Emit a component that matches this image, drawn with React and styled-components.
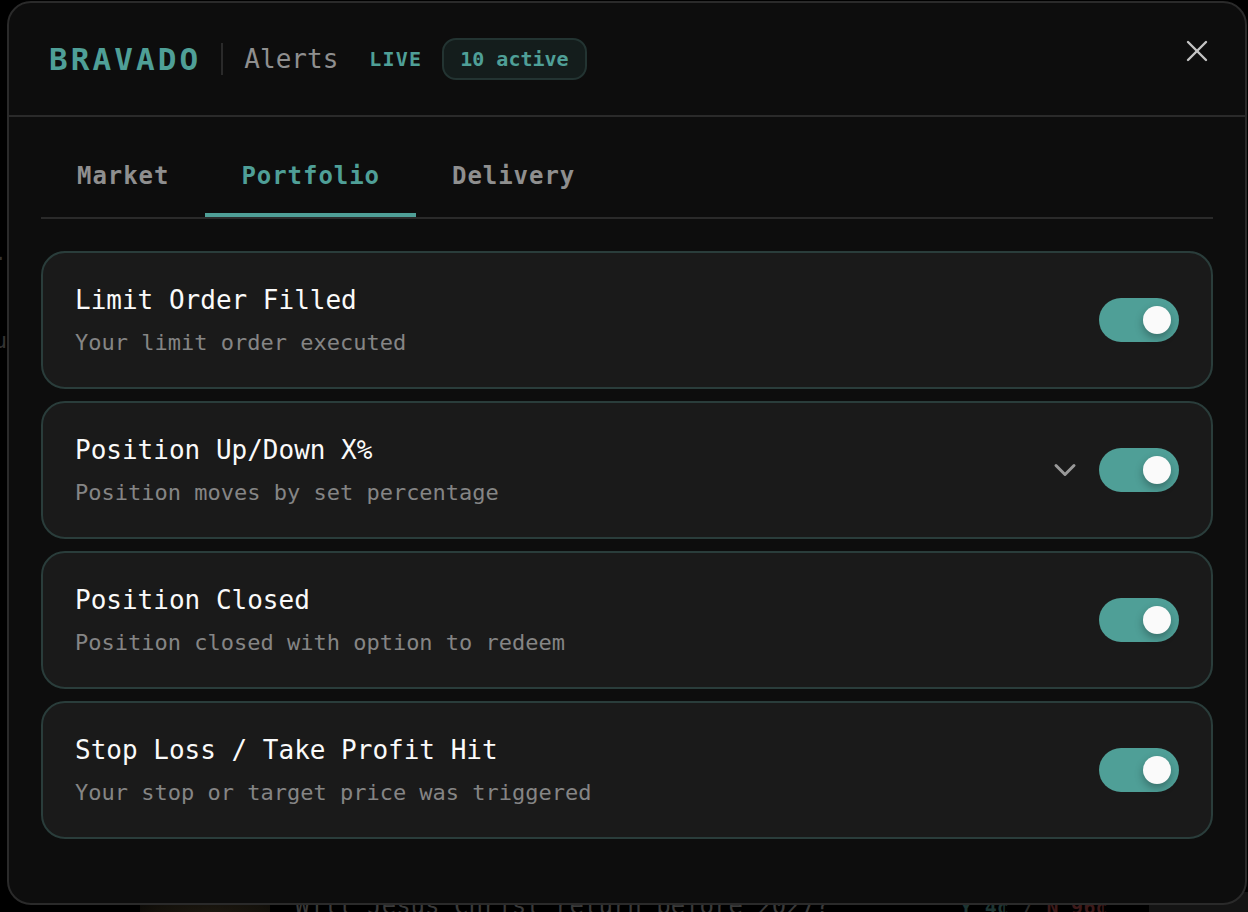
import React from 'react'
import styled, { createGlobalStyle } from 'styled-components'
import { X, ChevronDown } from 'lucide-react'

const rows = [
    { title: 'Limit Order Filled', desc: 'Your limit order executed' },
    { title: 'Position Up/Down X%', desc: 'Position moves by set percentage', expandable: true },
    { title: 'Position Closed', desc: 'Position closed with option to redeem' },
    { title: 'Stop Loss / Take Profit Hit', desc: 'Your stop or target price was triggered' },
]

const tabs = ['Market', 'Portfolio', 'Delivery']

const App = () => {
    return (
        <Page>
            <GlobalStyle />
            {/**what shows dimly behind the modal */}
            <BackdropEdge $top={240}>1.</BackdropEdge>
            <BackdropEdge $top={328}>u</BackdropEdge>
            <BackdropThumb />
            <BackdropText>Will Jesus Christ return before 2027?</BackdropText>
            <BackdropPrice>
                <PriceYes>Y 4¢</PriceYes> / <PriceNo>N 96¢</PriceNo>
            </BackdropPrice>
            <BackdropPanel />
            <Modal>
                <Header>
                    <Logo>BRAVADO</Logo>
                    <Divider />
                    <Title>Alerts</Title>
                    <Live>LIVE</Live>
                    <ActiveBadge>10 active</ActiveBadge>
                    <CloseButton>
                        <X size={36} strokeWidth={1.6} />
                    </CloseButton>
                </Header>
                <Body>
                    <TabBar>
                        {tabs.map(tab => (
                            <Tab key={tab} $active={tab === 'Portfolio'}>{tab}</Tab>
                        ))}
                    </TabBar>
                    <Rows>
                        {rows.map(row => (
                            <Row key={row.title}>
                                <RowText>
                                    <RowTitle>{row.title}</RowTitle>
                                    <RowDesc>{row.desc}</RowDesc>
                                </RowText>
                                <RowControls>
                                    {row.expandable && (
                                        <Chevron>
                                            <ChevronDown size={36} strokeWidth={2} />
                                        </Chevron>
                                    )}
                                    <Toggle>
                                        <Knob />
                                    </Toggle>
                                </RowControls>
                            </Row>
                        ))}
                    </Rows>
                </Body>
            </Modal>
        </Page>
    )
}

export default App

const GlobalStyle = createGlobalStyle`
    html, body {
        margin : 0;
        height : 100%;
        background-color : #000;
    }
    * {
        box-sizing : border-box;
    }
`

const Page = styled.div`
    position : relative;
    width : 1248px;
    height : 912px;
    overflow : hidden;
    padding : 1px 1px 7px 7px;
    background-color : #000;
    font-family : "DejaVu Sans Mono", "Liberation Mono", monospace;
`

const BackdropEdge = styled.div`
    position : absolute;
    right : 1241px;
    top : ${props => props.$top}px;
    font-size : 22px;
    line-height : 26px;
    color : #333;
    white-space : nowrap;
`

const BackdropText = styled.div`
    position : absolute;
    left : 295px;
    top : 892px;
    font-size : 24px;
    line-height : 28px;
    color : #3a3a3a;
    white-space : nowrap;
`

const BackdropPrice = styled.div`
    position : absolute;
    left : 960px;
    top : 894px;
    font-size : 20px;
    font-weight : 700;
    letter-spacing : 0.3px;
    line-height : 26px;
    color : #2a2a2a;
    white-space : nowrap;
`

const PriceYes = styled.span`
    color : #1d3533;
`

const PriceNo = styled.span`
    color : #3d1a1a;
`

const BackdropThumb = styled.div`
    position : absolute;
    left : 140px;
    top : 896px;
    width : 130px;
    height : 30px;
    background : radial-gradient(ellipse at 55% 60%, #1d1810 0%, #14110b 55%, #070605 100%);
`

const BackdropPanel = styled.div`
    position : absolute;
    left : 1149px;
    top : 892px;
    width : 99px;
    height : 20px;
    background-color : #141414;
`

const Modal = styled.div`
    position : relative;
    height : 904px;
    display : flex;
    flex-direction : column;
    background-color : #0d0d0d;
    border : 2px solid #2a2a2a;
    border-radius : 24px;
`

const Header = styled.div`
    height : 114px;
    flex-shrink : 0;
    display : flex;
    align-items : center;
    padding : 0 40px;
    border-bottom : 2px solid #2a2a2a;
`

const Logo = styled.div`
    font-size : 31px;
    font-weight : 700;
    letter-spacing : 3.1px;
    color : #4f9f97;
`

const Divider = styled.div`
    width : 2px;
    height : 32px;
    margin : 0 21px 0 20px;
    background-color : #2a2a2a;
`

const Title = styled.div`
    font-size : 26px;
    color : #8f8f8f;
`

const Live = styled.div`
    margin-left : 31px;
    font-size : 20px;
    font-weight : 700;
    letter-spacing : 1.2px;
    color : #4f9f97;
`

const ActiveBadge = styled.div`
    margin-left : 20px;
    height : 42px;
    display : flex;
    align-items : center;
    padding : 0 16px;
    font-size : 20px;
    font-weight : 700;
    color : #4f9f97;
    background-color : #141d1c;
    border : 2px solid #233432;
    border-radius : 14px;
`

const CloseButton = styled.div`
    margin-left : auto;
    margin-right : -10px;
    margin-top : -16px;
    display : flex;
    color : #c4c4c4;
`

const Body = styled.div`
    padding : 0 32px;
`

const TabBar = styled.div`
    height : 102px;
    display : flex;
    align-items : stretch;
    border-bottom : 2px solid #2a2a2a;
`

const Tab = styled.div`
    display : flex;
    align-items : center;
    padding : 21px 36px 0;
    font-size : 24px;
    font-weight : 700;
    letter-spacing : 0.95px;
    color : ${props => (props.$active ? '#4f9f97' : '#8f8f8f')};
    border-bottom : 4px solid ${props => (props.$active ? '#4f9f97' : 'transparent')};
`

const Rows = styled.div`
    display : flex;
    flex-direction : column;
    gap : 12px;
    margin-top : 32px;
`

const Row = styled.div`
    height : 138px;
    display : flex;
    align-items : center;
    justify-content : space-between;
    padding : 0 32px;
    background-color : #1a1a1a;
    border : 2px solid #2a3d3b;
    border-radius : 24px;
`

const RowText = styled.div`
    display : flex;
    flex-direction : column;
    gap : 14px;
    padding-top : 2px;
`

const RowTitle = styled.div`
    font-size : 26px;
    line-height : 30px;
    color : #fafafa;
`

const RowDesc = styled.div`
    font-size : 22px;
    line-height : 28px;
    color : #858585;
`

const RowControls = styled.div`
    display : flex;
    align-items : center;
    gap : 16px;
`

const Chevron = styled.div`
    display : flex;
    color : #999;
`

const Toggle = styled.div`
    position : relative;
    width : 80px;
    height : 44px;
    border-radius : 22px;
    background-color : #4f9f97;
`

const Knob = styled.div`
    position : absolute;
    top : 8px;
    right : 8px;
    width : 28px;
    height : 28px;
    border-radius : 50%;
    background-color : #fafafa;
    box-shadow : 0 4px 8px rgba(0, 0, 0, 0.3);
`
